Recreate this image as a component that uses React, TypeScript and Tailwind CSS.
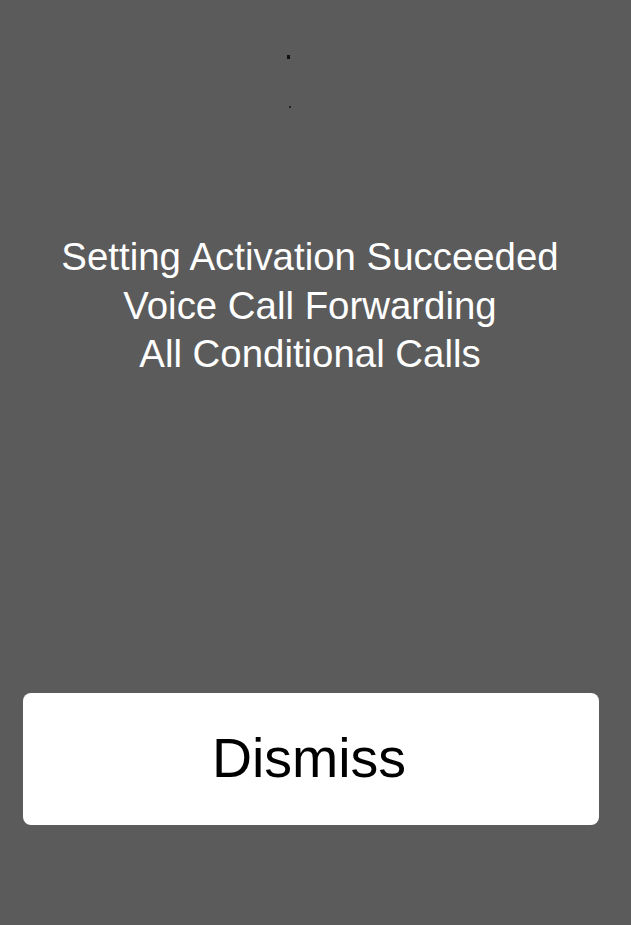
import React from 'react';

const LINES = ['Setting Activation Succeeded', 'Voice Call Forwarding', 'All Conditional Calls'];

export default function App() {
  return (
    <div
      className="w-full h-[925px] bg-[#5b5b5b] flex flex-col overflow-hidden"
      style={{ fontFamily: '"Liberation Sans", Arial, sans-serif' }}
    >
      {/* stray pixels at the top of the screen */}
      <div className="pt-[55px] flex flex-col">
        <div className="ml-[287px] w-[3px] h-[4px] bg-[#111]" />
        <div className="ml-[289px] mt-[47px] w-[2px] h-[2px] bg-[#222]" />
      </div>

      <div className="mt-[125px] pr-[11px] flex flex-col items-center text-white text-[38.4px] leading-[48.5px]">
        {LINES.map((line) => (
          <p key={line}>{line}</p>
        ))}
      </div>

      <button
        type="button"
        className="mt-[314px] ml-[23px] w-[576px] h-[132px] pr-[4px] rounded-[8px] bg-white text-black text-[55.5px] leading-none flex items-center justify-center"
      >
        Dismiss
      </button>
    </div>
  );
}
